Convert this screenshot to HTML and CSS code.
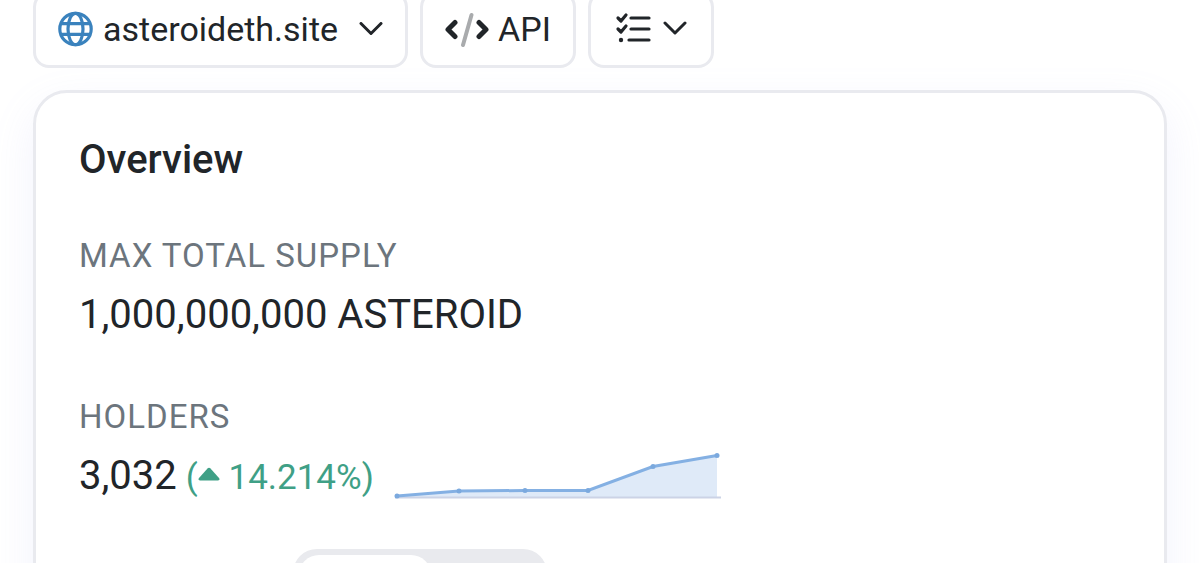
FILE: index.html
```html
<!doctype html>
<html lang="en">
  <head>
    <meta charset="UTF-8" />
    <meta content="width=device-width, initial-scale=1.0" name="viewport" />
    <title>ASTEROID Token Overview</title>
    <link rel="stylesheet" href="styles.css" />
  </head>
  <body>
    <main class="page">
      <div class="toolbar">
        <button class="tool-btn" type="button">
          <svg class="icon-globe" viewBox="0 0 36 36" fill="none" stroke="currentColor" stroke-width="3.2">
            <circle cx="17.500" cy="18" r="15.700" />
            <ellipse cx="17.500" cy="18" rx="7.500" ry="15.700" />
            <path d="M3 12.600h29M3 23.400h29" />
          </svg>
          <span>asteroideth.site</span>
          <svg class="icon-chevron" viewBox="0 0 24 14">
            <path d="M2 1.500l10 10L22 1.500" />
          </svg>
        </button>
        <button class="tool-btn" type="button">
          <svg class="icon-code" viewBox="0 0 44 36" fill="none" stroke-linecap="round" stroke-linejoin="round">
            <path d="M10 11.500l-7 7 7 7M34 11.500l7 7-7 7" stroke="#212529" stroke-width="5" />
            <path d="M26.500 4l-8.500 30" stroke="#a9abad" stroke-width="4" />
          </svg>
          <span>API</span>
        </button>
        <button class="tool-btn tool-btn-list" type="button" aria-label="More options">
          <svg class="icon-list" viewBox="0 0 36 32" fill="none" stroke="currentColor" stroke-width="3.2" stroke-linecap="round" stroke-linejoin="round">
            <path d="M3 6l3 3 5-6M3 17l3 3 5-6M16 6h18M16 17h18M14 28h20" />
            <circle cx="6" cy="28" r="2.200" fill="currentColor" stroke="none" />
          </svg>
          <svg class="icon-chevron" viewBox="0 0 24 14">
            <path d="M2 2l10 10L22 2" />
          </svg>
        </button>
      </div>

      <section class="card">
        <h2 class="card-title">Overview</h2>

        <div class="item">
          <h3 class="item-label">MAX TOTAL SUPPLY</h3>
          <div class="item-value">1,000,000,000 ASTEROID</div>
        </div>

        <div class="item">
          <h3 class="item-label">HOLDERS</h3>
          <div class="item-value holders">
            <span>3,032</span>
            <span class="change">(<svg class="icon-up" viewBox="0 0 22 14"><path d="M2 13.500Q-.5 13 1 11L9.500 1.500Q11 0 12.500 1.500L21 11Q22.500 13 20 13.500z" /></svg> 14.214%)</span>
            <svg class="chart" viewBox="0 0 328 50">
              <path class="chart-area" d="M4 44.500L66 39l66-.5h63l65-24.500 64-11V45H4z" />
              <path class="chart-axis" d="M2 45.500h326" />
              <path class="chart-line" d="M4 44L66 39l66-.5h63L260 14.500l64-11" />
              <g class="chart-dots">
                <circle cx="4" cy="44" r="2.500" />
                <circle cx="66" cy="39" r="2.500" />
                <circle cx="132" cy="38.500" r="2.500" />
                <circle cx="195" cy="38.500" r="2.500" />
                <circle cx="260" cy="14.500" r="2.500" />
                <circle cx="324" cy="3.500" r="2.500" />
              </g>
            </svg>
          </div>
        </div>

        <div class="toggle">
          <button class="toggle-btn active" type="button" aria-label="Onchain"></button>
          <button class="toggle-btn" type="button" aria-label="Circulating"></button>
        </div>
      </section>
    </main>
  </body>
</html>
```
FILE: styles.css
```css
* {
  box-sizing: border-box;
  padding: 0;
  margin: 0;
}

body {
  height: 100vh;
  overflow: hidden;
  font-family: Roboto, "Liberation Sans", sans-serif;
  color: #212529;
  background: #fff;
}

button {
  font: inherit;
  color: inherit;
  border: 0;
}

svg {
  display: block;
  flex: none;
}

.page {
  padding: 0 33px;
}

/* the bar is scrolled partly out of view */
.toolbar {
  display: flex;
  gap: 12px;
  margin-top: -9px;
  margin-bottom: 22px;
}

.tool-btn {
  display: flex;
  align-items: center;
  height: 77px;
  padding: 0 22px 2px;
  font-size: 34px;
  line-height: 40px;
  background: #fff;
  border: 3px solid #e9eaef;
  border-radius: 16px;
  gap: 9px;
}

.tool-btn .icon-chevron {
  margin-left: 12px;
}

.tool-btn-list {
  padding: 0 24px 4px;
}

.tool-btn-list .icon-chevron {
  margin-left: 3px;
}

.icon-globe {
  width: 36px;
  height: 36px;
  color: #3a82bd;
}

.icon-chevron {
  width: 24px;
  height: 14px;
  fill: none;
  stroke: currentColor;
  stroke-width: 3;
  stroke-linecap: round;
  stroke-linejoin: round;
}

.icon-code {
  width: 44px;
  height: 36px;
}

.icon-list {
  width: 36px;
  height: 32px;
}

.card {
  padding: 43px;
  background: #fff;
  border: 3px solid #e9eaef;
  border-radius: 34px;
  box-shadow: 0 16px 44px rgba(150, 160, 235, 0.12);
}

.card-title {
  margin-bottom: 52px;
  font-size: 40px;
  font-weight: 500;
  line-height: 48px;
}

.item {
  margin-bottom: 58px;
}

.item-label {
  margin-bottom: 15px;
  font-size: 33px;
  font-weight: 400;
  line-height: 40px;
  letter-spacing: 1px;
  color: #6c757d;
}

.item-value {
  font-size: 40px;
  line-height: 48px;
}

.holders {
  display: flex;
  align-items: baseline;
  gap: 9px;
}

.change {
  font-size: 35px;
  color: #3fa086;
}

.icon-up {
  display: inline-block;
  width: 22px;
  height: 14px;
  vertical-align: 8px;
  fill: currentColor;
}

.chart {
  align-self: flex-end;
  width: 328px;
  height: 50px;
  margin-left: 10px;
}

.chart-area {
  fill: #dfeaf8;
}

.chart-axis {
  stroke: #ccd3e6;
  stroke-width: 2;
}

.chart-line {
  fill: none;
  stroke: #84b0e3;
  stroke-width: 3;
}

.chart-dots {
  fill: #7ba9de;
}

.toggle {
  display: flex;
  width: 254px;
  height: 62px;
  padding: 6px;
  margin-top: -11px;
  margin-left: 214px;
  background: #e9eaee;
  border-radius: 24px;
}

.toggle-btn {
  flex: 1;
  background: none;
  border-radius: 20px;
}

.toggle-btn.active {
  flex: none;
  width: 132px;
  background: #fff;
}
```
